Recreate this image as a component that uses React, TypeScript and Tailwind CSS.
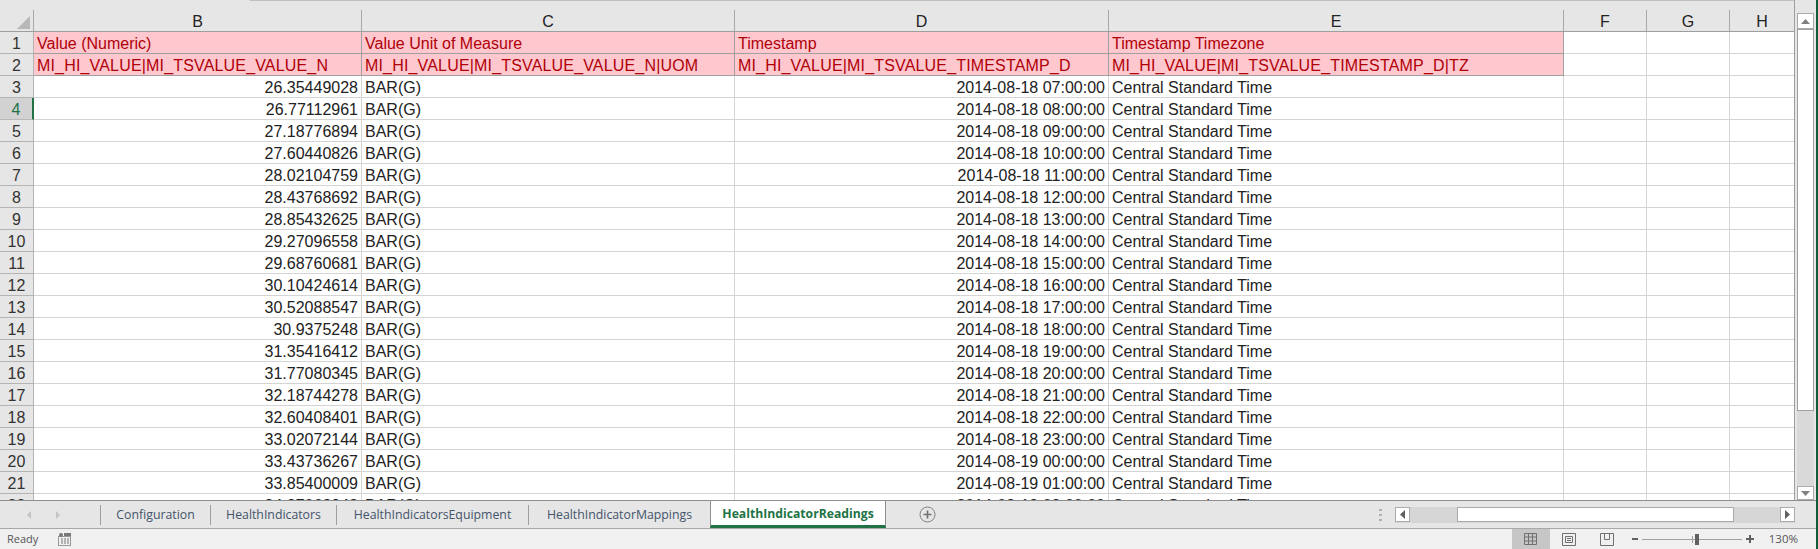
const values = ["26.35449028","26.77112961","27.18776894","27.60440826","28.02104759","28.43768692","28.85432625","29.27096558","29.68760681","30.10424614","30.52088547","30.9375248","31.35416412","31.77080345","32.18744278","32.60408401","33.02072144","33.43736267","33.85400009","34.27063942"];
const times = ["2014-08-18 07:00:00","2014-08-18 08:00:00","2014-08-18 09:00:00","2014-08-18 10:00:00","2014-08-18 11:00:00","2014-08-18 12:00:00","2014-08-18 13:00:00","2014-08-18 14:00:00","2014-08-18 15:00:00","2014-08-18 16:00:00","2014-08-18 17:00:00","2014-08-18 18:00:00","2014-08-18 19:00:00","2014-08-18 20:00:00","2014-08-18 21:00:00","2014-08-18 22:00:00","2014-08-18 23:00:00","2014-08-19 00:00:00","2014-08-19 01:00:00","2014-08-19 02:00:00"];

const cell = "h-[22px] shrink-0 border-r border-b border-[#d4d4d4] px-[3px] leading-[24px] whitespace-nowrap overflow-hidden";
const pink = "h-[22px] shrink-0 border-r border-b border-[#a0a0a0] bg-[#ffc7ce] text-[#b00008] px-[3px] leading-[24px] whitespace-nowrap";
const cols = ["w-[328px]", "w-[373px]", "w-[374px]", "w-[455px]", "w-[83px]", "w-[83px]", "w-[65px]"];

function ColHead({ w, label }: { w: string; label: string }) {
  return <div className={`${w} h-[21px] shrink-0 border-r border-[#a8a8a8] text-center text-[16px] leading-[24px] text-[#222]`}>{label}</div>;
}

function RowHead({ n, active }: { n: number; active?: boolean }) {
  return (
    <div className={`w-[34px] h-[22px] shrink-0 border-r border-b text-center text-[16px] leading-[24px] ${active ? "bg-[#d2d2d2] text-[#217346] border-r-2 border-r-[#217346] border-b-[#b8b8b8]" : "bg-[#e6e6e6] text-[#333] border-[#b4b4b4]"}`}>{n}</div>
  );
}

function Tab({ w, label, last }: { w: string; label: string; last?: boolean }) {
  return (
    <div className={`${w} h-[20px] shrink-0 text-center ${last ? "" : "border-r border-[#9e9e9e]"} text-[12.3px] leading-[20px] text-[#44546a] whitespace-nowrap`}>{label}</div>
  );
}

export default function App() {
  return (
    <div className="w-[1818px] h-[549px] flex flex-col overflow-hidden bg-[#e6e6e6] border-r-2 border-[#0f5c38] text-[16px] text-[#222] font-['Liberation_Sans',Arial,sans-serif]">
      <div className="flex-1 min-h-0 flex">
        <div className="w-[1795px] shrink-0 flex flex-col overflow-hidden border-r border-[#9e9e9e]">
          <div className="h-[10px] shrink-0 flex">
            <div className="w-[250px]" />
            <div className="flex-1 h-[1px] bg-[#c0c0c0]" />
          </div>
          <div className="flex h-[22px] shrink-0 border-b border-[#9e9e9e]">
            <div className="w-[34px] shrink-0 relative border-r border-[#a8a8a8]">
              <svg className="absolute left-[17px] top-[6px]" width="13" height="13" viewBox="0 0 13 13"><path d="M13 0v13H0z" fill="#b8b8b8" /></svg>
            </div>
            <ColHead w={cols[0]} label="B" />
            <ColHead w={cols[1]} label="C" />
            <ColHead w={cols[2]} label="D" />
            <ColHead w={cols[3]} label="E" />
            <ColHead w={cols[4]} label="F" />
            <ColHead w={cols[5]} label="G" />
            <ColHead w={cols[6]} label="H" />
          </div>
          <div className="flex">
            <RowHead n={1} />
            <div className={`${cols[0]} ${pink}`}>Value (Numeric)</div>
            <div className={`${cols[1]} ${pink}`}>Value Unit of Measure</div>
            <div className={`${cols[2]} ${pink}`}>Timestamp</div>
            <div className={`${cols[3]} ${pink}`}>Timestamp Timezone</div>
            <div className={`${cols[4]} ${cell} bg-white`} />
            <div className={`${cols[5]} ${cell} bg-white`} />
            <div className={`${cols[6]} ${cell} bg-white`} />
          </div>
          <div className="flex">
            <RowHead n={2} />
            <div className={`${cols[0]} ${pink} tracking-[0.17px]`}>MI_HI_VALUE|MI_TSVALUE_VALUE_N</div>
            <div className={`${cols[1]} ${pink} tracking-[0.17px]`}>MI_HI_VALUE|MI_TSVALUE_VALUE_N|UOM</div>
            <div className={`${cols[2]} ${pink} tracking-[0.17px]`}>MI_HI_VALUE|MI_TSVALUE_TIMESTAMP_D</div>
            <div className={`${cols[3]} ${pink} tracking-[0.17px]`}>MI_HI_VALUE|MI_TSVALUE_TIMESTAMP_D|TZ</div>
            <div className={`${cols[4]} ${cell} bg-white`} />
            <div className={`${cols[5]} ${cell} bg-white`} />
            <div className={`${cols[6]} ${cell} bg-white`} />
          </div>
          {values.map((v, i) => (
            <div className="flex shrink-0" key={v}>
              <RowHead n={i + 3} active={i === 1} />
              <div className={`${cols[0]} ${cell} bg-white text-right`}>{v}</div>
              <div className={`${cols[1]} ${cell} bg-white`}>BAR(G)</div>
              <div className={`${cols[2]} ${cell} bg-white text-right`}>{times[i]}</div>
              <div className={`${cols[3]} ${cell} bg-white`}>Central Standard Time</div>
              <div className={`${cols[4]} ${cell} bg-white`} />
              <div className={`${cols[5]} ${cell} bg-white`} />
              <div className={`${cols[6]} ${cell} bg-white`} />
            </div>
          ))}
        </div>
        <div className="flex-1 min-w-0 pt-[13px] pr-[2px] pl-[2px] flex flex-col">
          <div className="h-[16px] shrink-0 bg-white border border-[#ababab] flex items-center justify-center">
            <svg width="9" height="5" viewBox="0 0 9 5"><path d="M4.5 0 9 5H0z" fill="#808080" /></svg>
          </div>
          <div className="h-[382px] shrink-0 bg-white border border-[#a0a0a0]" />
          <div className="flex-1 bg-[#d9d9d9]" />
          <div className="h-[14px] shrink-0 bg-white border border-[#ababab] flex items-center justify-center">
            <svg width="9" height="5" viewBox="0 0 9 5"><path d="M4.5 5 9 0H0z" fill="#808080" /></svg>
          </div>
        </div>
      </div>
      <div className="h-[29px] shrink-0 flex border-t border-b border-[#a8a8a8] border-t-[#8e8e8e] font-['Open_Sans',sans-serif]">
        <div className="w-[101px] shrink-0 flex items-center">
          <svg className="ml-[25px]" width="8" height="10" viewBox="0 0 8 10"><path d="M6 1v8L2 5z" fill="#c4c4c4" /></svg>
          <svg className="ml-[21px]" width="8" height="10" viewBox="0 0 8 10"><path d="M2 1v8l4-4z" fill="#c4c4c4" /></svg>
          <div className="ml-auto h-[20px] w-px bg-[#9e9e9e]" />
        </div>
        <div className="flex items-center">
          <Tab w="w-[110px]" label="Configuration" />
          <Tab w="w-[126px]" label="HealthIndicators" />
          <Tab w="w-[192px]" label="HealthIndicatorsEquipment" />
          <Tab w="w-[181px]" label="HealthIndicatorMappings" last />
        </div>
        <div className="w-[176px] -mt-px h-[28px] shrink-0 bg-white border-x border-t border-[#8e8e8e] border-b-[3px] border-b-[#217346] text-center text-[12.2px] leading-[25px] font-bold text-[#217346] whitespace-nowrap">HealthIndicatorReadings</div>
        <div className="ml-[33px] w-[17px] shrink-0 flex items-center">
          <svg width="17" height="17" viewBox="0 0 17 17"><circle cx="8.5" cy="8.5" r="7.5" fill="none" stroke="#808080" /><path d="M8.5 4.5v8M4.5 8.5h8" stroke="#707070" strokeWidth="1.6" /></svg>
        </div>
        <div className="flex-1" />
        <div className="w-[3px] h-[12px] self-center flex flex-col justify-between mr-[13px]">
          <span className="h-[2px] bg-[#b0b0b0]" /><span className="h-[2px] bg-[#b0b0b0]" /><span className="h-[2px] bg-[#b0b0b0]" />
        </div>
        <div className="w-[400px] mr-[21px] flex items-center h-[16px] self-center bg-[#d6d6d6]">
          <div className="w-[15px] h-[15px] bg-white border border-[#ababab] flex items-center justify-center">
            <svg width="5" height="9" viewBox="0 0 5 9"><path d="M0 4.5 5 0v9z" fill="#606060" /></svg>
          </div>
          <div className="w-[47px]" />
          <div className="w-[277px] h-[15px] bg-white border border-[#ababab]" />
          <div className="flex-1" />
          <div className="w-[15px] h-[15px] bg-white border border-[#ababab] flex items-center justify-center">
            <svg width="5" height="9" viewBox="0 0 5 9"><path d="M5 4.5 0 0v9z" fill="#606060" /></svg>
          </div>
        </div>
      </div>
      <div className="h-[20px] shrink-0 flex items-center bg-[#f0f0f0] font-['Open_Sans',sans-serif] text-[11px] text-[#555]">
        <span className="ml-[7px] w-[31px]">Ready</span>
        <svg className="ml-[20px]" width="14" height="13" viewBox="0 0 14 13"><rect x="0.5" y="3.5" width="12" height="9" fill="none" stroke="#999" /><path d="M3 6h2M6 6h2M9 6h2M3 8h2M6 8h2M9 8h2M3 10h2M6 10h2M9 10h2" stroke="#777" /><circle cx="3" cy="2" r="2" fill="#777" /><rect x="6" y="0" width="7" height="3" fill="#777" /></svg>
        <div className="flex-1" />
        <div className="w-[38px] h-[20px] bg-[#c6c6c6] flex items-center justify-center">
          <svg width="13" height="12" viewBox="0 0 13 12"><path d="M.5.5h12v11H.5zM.5 4h12M.5 8h12M4.5.5v11M8.5.5v11" fill="none" stroke="#707070" /></svg>
        </div>
        <div className="w-[38px] flex justify-center">
          <svg width="14" height="13" viewBox="0 0 14 13"><path d="M.5.5h13v12H.5z" fill="none" stroke="#707070" /><path d="M3.5 3.5h7v6h-7zM5 5.5h4M5 7.5h4" fill="none" stroke="#707070" /></svg>
        </div>
        <div className="w-[38px] flex justify-center">
          <svg width="14" height="13" viewBox="0 0 14 13"><path d="M.5.5h13v12H.5zM4.5.5v6h5v-6" fill="none" stroke="#707070" /></svg>
        </div>
        <div className="w-[6px] h-[2px] ml-[6px] bg-[#606060]" />
        <div className="w-[100px] h-px ml-[4px] bg-[#a0a0a0] relative">
          <div className="absolute left-[50px] -top-[3px] w-px h-[7px] bg-[#a0a0a0]" />
          <div className="absolute left-[53px] -top-[5px] w-[4px] h-[11px] bg-[#606060]" />
        </div>
        <svg className="ml-[4px]" width="8" height="8" viewBox="0 0 8 8"><path d="M4 0v8M0 4h8" stroke="#606060" strokeWidth="2" /></svg>
        <span className="ml-[15px] mr-[18px] text-[11.5px]">130%</span>
      </div>
    </div>
  );
}
